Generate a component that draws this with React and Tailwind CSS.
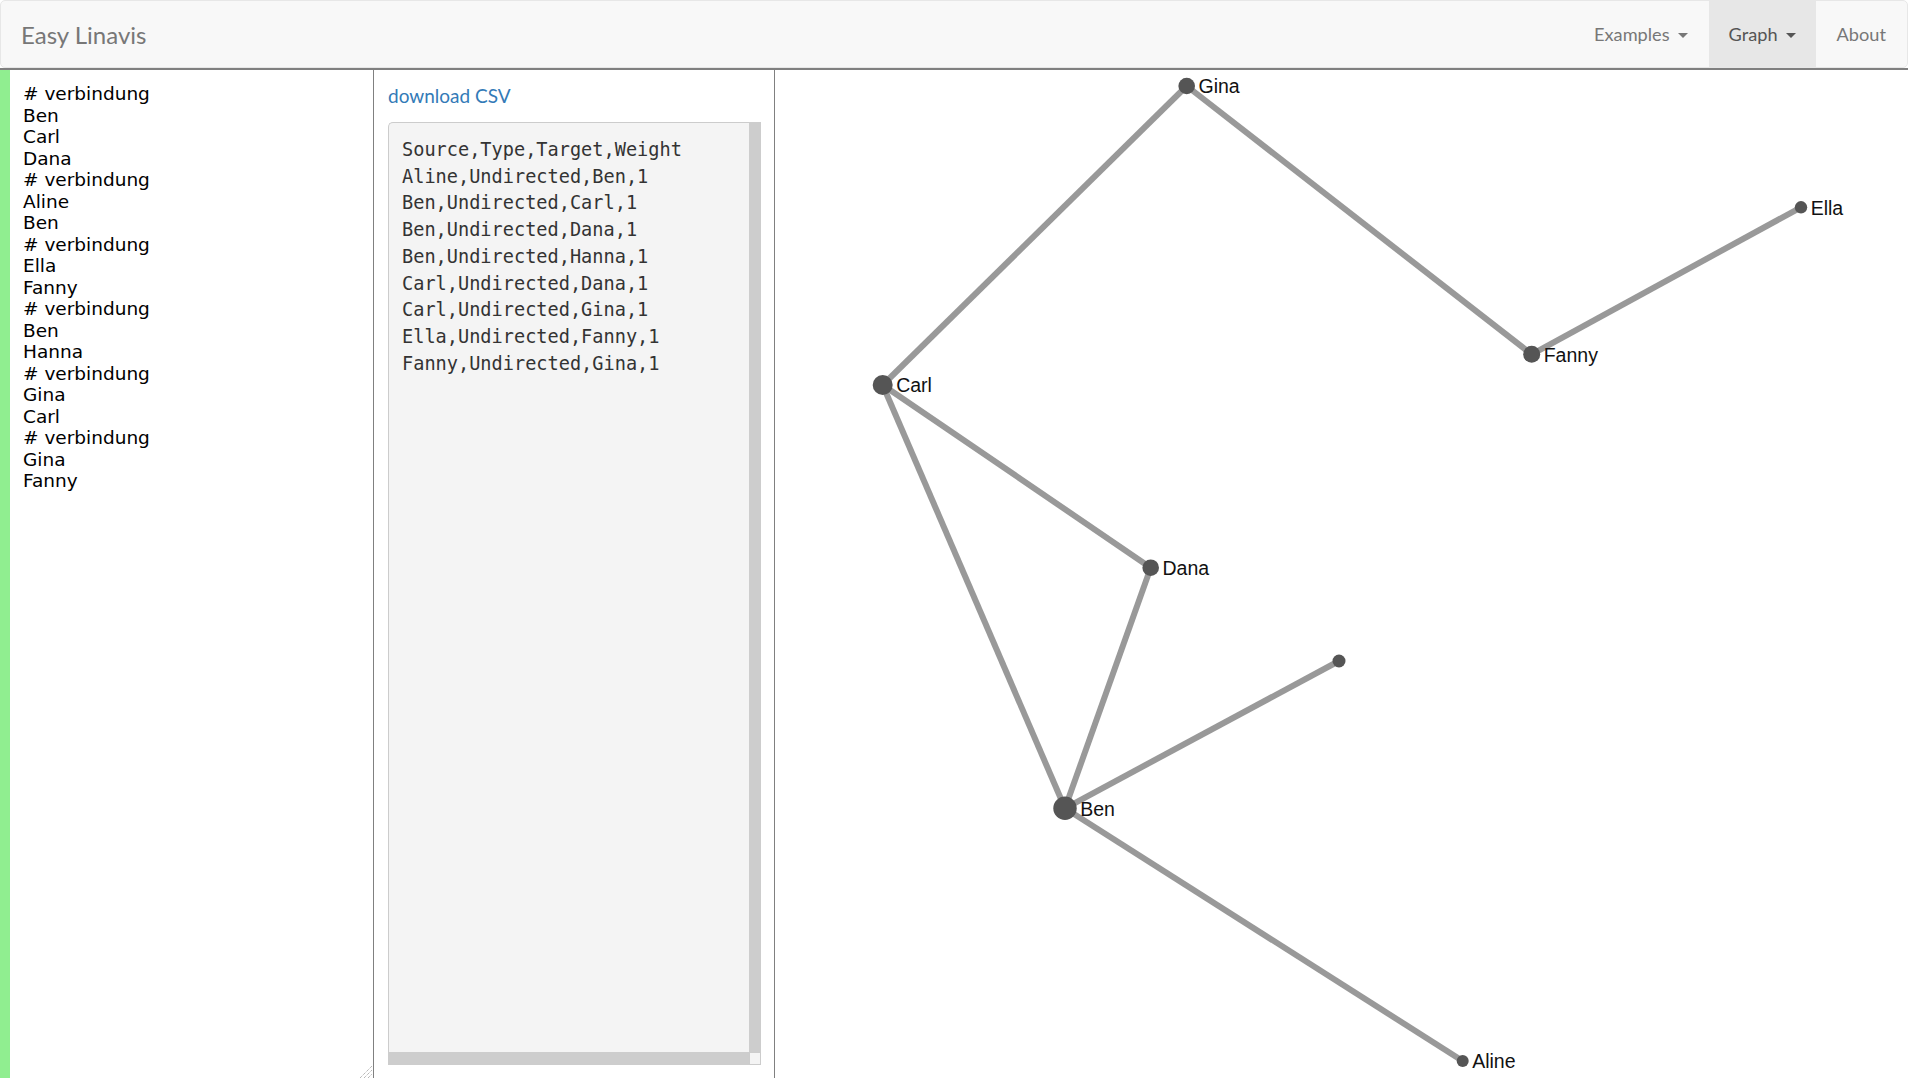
import React from "react";

const lines = [
  "# verbindung", "Ben", "Carl", "Dana",
  "# verbindung", "Aline", "Ben",
  "# verbindung", "Ella", "Fanny",
  "# verbindung", "Ben", "Hanna",
  "# verbindung", "Gina", "Carl",
  "# verbindung", "Gina", "Fanny",
];

const csv = [
  "Source,Type,Target,Weight",
  "Aline,Undirected,Ben,1",
  "Ben,Undirected,Carl,1",
  "Ben,Undirected,Dana,1",
  "Ben,Undirected,Hanna,1",
  "Carl,Undirected,Dana,1",
  "Carl,Undirected,Gina,1",
  "Ella,Undirected,Fanny,1",
  "Fanny,Undirected,Gina,1",
];

// node positions in page coordinates
const nodes = {
  Gina: { x: 1186.7, y: 86, r: 8.3, label: true },
  Carl: { x: 882.7, y: 385, r: 10, label: true },
  Dana: { x: 1150.7, y: 567.7, r: 8.3, label: true },
  Hanna: { x: 1339, y: 661, r: 6.5, label: false },
  Ben: { x: 1065, y: 808.3, r: 11.7, label: true },
  Fanny: { x: 1531.7, y: 354.3, r: 8.5, label: true },
  Ella: { x: 1801, y: 207.3, r: 6.2, label: true },
  Aline: { x: 1462.7, y: 1061, r: 6, label: true },
};

const edges = [
  ["Aline", "Ben"],
  ["Ben", "Carl"],
  ["Ben", "Dana"],
  ["Ben", "Hanna"],
  ["Carl", "Dana"],
  ["Carl", "Gina"],
  ["Ella", "Fanny"],
  ["Fanny", "Gina"],
];

function Caret() {
  return (
    <span className="ml-2 inline-block w-0 h-0 border-t-[5px] border-t-current border-x-[5px] border-x-transparent align-middle" />
  );
}

function Navbar() {
  return (
    <nav className="h-[68px] shrink-0 flex items-stretch justify-between bg-[#f8f8f8] border border-[#e7e7e7] rounded-[5px] font-['Lato',sans-serif]">
      <a href="#" className="flex items-center pl-[20px] pt-[2px] text-[24px] text-[#777]">
        Easy Linavis
      </a>
      <ul className="flex items-stretch text-[18.2px] text-[#777]">
        <li className="flex items-center px-[21px] pt-[2px]">
          Examples
          <Caret />
        </li>
        <li className="flex items-center px-[20px] pt-[2px] bg-[#e7e7e7] text-[#555]">
          Graph
          <Caret />
        </li>
        <li className="flex items-center px-[21px] pt-[2px]">About</li>
      </ul>
    </nav>
  );
}

function Graph() {
  return (
    <svg width="1133" height="1008" viewBox="775 70 1133 1008" className="block">
      {edges.map(([a, b]) => (
        <line
          key={a + b}
          x1={nodes[a].x}
          y1={nodes[a].y}
          x2={nodes[b].x}
          y2={nodes[b].y}
          stroke="#999"
          strokeWidth="6"
        />
      ))}
      {Object.entries(nodes).map(([name, n]) => (
        <g key={name}>
          <circle cx={n.x} cy={n.y} r={n.r} fill="#555" />
          {n.label && (
            <text
              x={n.x + n.r + 3.5}
              y={n.y}
              dy="0.38em"
              fill="#111"
              fontSize="19.5"
              fontFamily="'Liberation Sans', Arial, sans-serif"
            >
              {name}
            </text>
          )}
        </g>
      ))}
    </svg>
  );
}

export default function App() {
  return (
    <div className="h-screen flex flex-col overflow-hidden bg-white">
      <Navbar />

      <main className="flex-1 flex min-h-0 border-t-2 border-[#808080]">
        {/* input */}
        <div className="relative w-[374px] shrink-0 border-l-[10px] border-[#90ee90] border-r border-r-[#808080] pl-[13px] pt-[13px] font-['DejaVu_Sans',sans-serif] text-[18.5px] leading-[21.5px] text-black">
          {lines.map((l, i) => (
            <div key={i}>{l}</div>
          ))}
          <svg width="14" height="14" viewBox="0 0 14 14" className="absolute right-[1px] bottom-0">
            <line x1="2" y1="14" x2="14" y2="2" stroke="#999" strokeWidth="1" strokeDasharray="1 1" />
            <line x1="6" y1="14" x2="14" y2="6" stroke="#999" strokeWidth="1" strokeDasharray="1 1" />
            <line x1="10" y1="14" x2="14" y2="10" stroke="#999" strokeWidth="1" strokeDasharray="1 1" />
          </svg>
        </div>

        {/* csv */}
        <div className="w-[401px] shrink-0 border-r border-[#808080] pl-[14px] pt-[12px]">
          <a href="#" className="block text-[19px] leading-[27px] text-[#337ab7] font-['Lato',sans-serif]">
            download CSV
          </a>
          <div className="mt-[13px] w-[373px] h-[943px] grid grid-cols-[1fr_12px] grid-rows-[1fr_13px]">
            <pre className="bg-[#f4f4f4] border-l border-t border-[#ccc] rounded-tl-[5px] pl-[13px] pt-[14px] font-['DejaVu_Sans_Mono',monospace] text-[18.6px] leading-[26.7px] text-[#333] overflow-hidden">
              {csv.join("\n")}
            </pre>
            <div className="bg-[#cdcdcd]" />
            <div className="bg-[#cdcdcd]" />
            <div className="bg-[#f4f4f4] border border-[#ccc]" />
          </div>
        </div>

        {/* graph */}
        <div className="flex-1 min-w-0">
          <Graph />
        </div>
      </main>
    </div>
  );
}
